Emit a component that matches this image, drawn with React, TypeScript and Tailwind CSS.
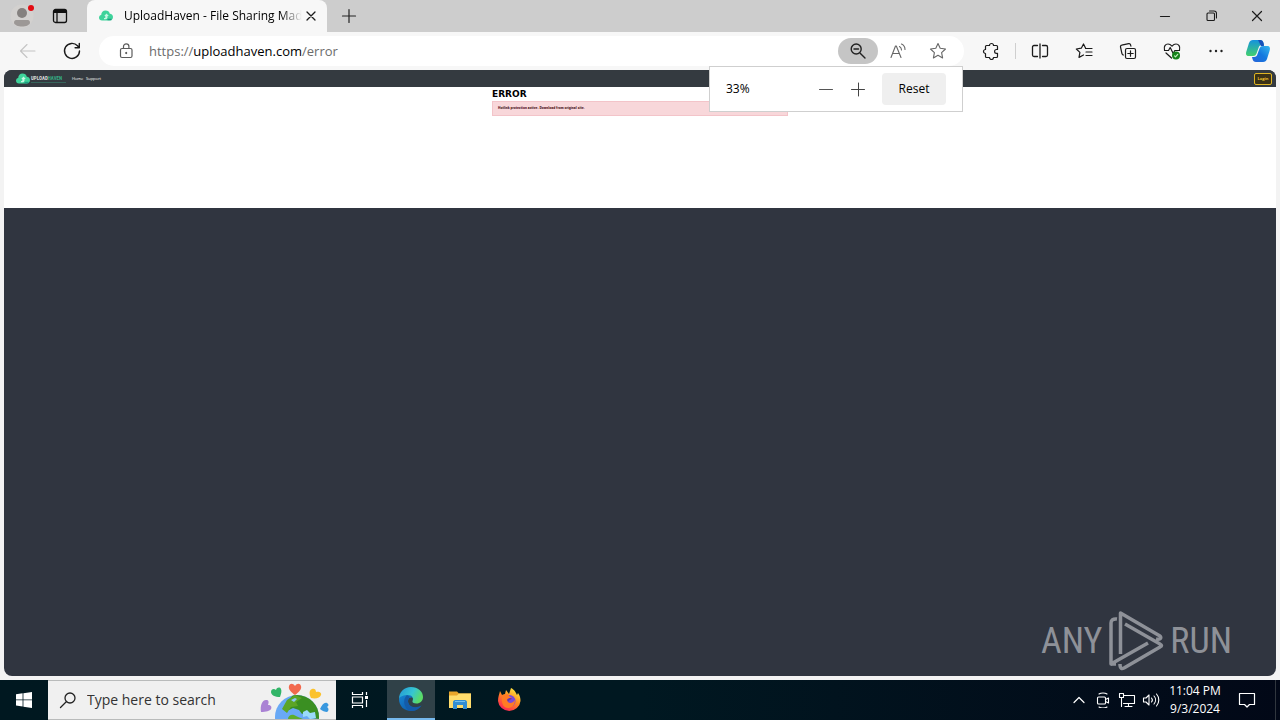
import type { ReactNode } from "react";

function ToolButton({ label, width = "w-11", children }: { label: string; width?: string; children: ReactNode }) {
  return (
    <button type="button" aria-label={label} className={`${width} flex h-7 shrink-0 items-center justify-center`}>
      {children}
    </button>
  );
}

function Line({ d, size = 20, width = 1.2, color = "#1b1b1b", children }: { d: string; size?: number; width?: number; color?: string; children?: ReactNode }) {
  return (
    <svg width={size} height={size} viewBox={`0 0 ${size} ${size}`} fill="none" stroke={color} strokeWidth={width} strokeLinecap="round" strokeLinejoin="round" aria-hidden="true">
      <path d={d} />
      {children}
    </svg>
  );
}

function CloudLogo({ className }: { className: string }) {
  return (
    <svg viewBox="0 0 14 12" className={className} aria-hidden="true">
      <path d="M3 10.5C1.2 10.5 0 9.4 0 7.8 0 6.3 1 5.3 2.2 5.1 2.2 2.5 4 .5 6.6.5c2.2 0 3.7 1.2 4.2 3.2C12.7 3.8 14 5.3 14 7.1c0 2-1.5 3.4-3.4 3.4z" fill="#3fd39b" />
      <path d="M7.500 3.500l2.300 2.600H8.500v1.500c0 1-.8 1.700-1.800 1.700H5V8h1.300V6.100H5.200z" fill="#c9f7e4" />
      <path d="M8.500 9.500h4" stroke="#1d9f83" strokeWidth="1.500" />
    </svg>
  );
}

function TabStrip() {
  return (
    <header className="flex h-8 shrink-0 bg-[#cdcdcd]">
      <div className="flex w-[87px] shrink-0 items-center">
        <button type="button" aria-label="Profile" className="flex w-11 items-center justify-center">
          <svg width="26" height="26" viewBox="0 0 26 26" aria-hidden="true">
            <circle cx="13" cy="13" r="11.5" fill="#d3d1cf" />
            <circle cx="13" cy="10" r="5" fill="#85817f" />
            <path d="M5 19.5C5 17.5 6.5 17 8 17h10c1.5 0 3 .5 3 2.500 0 2.500-4 4-8 4s-8-1.500-8-4z" fill="#9c9896" />
            <circle cx="22" cy="5" r="3" fill="#e30b12" />
          </svg>
        </button>
        <button type="button" aria-label="Tab actions" className="flex w-8 items-center justify-center">
          <svg width="16" height="16" viewBox="0 0 16 16" fill="none" stroke="#111" strokeWidth="1.300" aria-hidden="true">
            <rect x="1.500" y="1.500" width="13" height="13" rx="2" />
            <path d="M5 5v9" />
            <path d="M2 3.500h12" strokeWidth="3" />
          </svg>
        </button>
      </div>
      <div className="flex w-60 shrink-0 items-center rounded-t-lg bg-[#f7f7f7] pl-3">
        <CloudLogo className="h-3.5 w-3.5 shrink-0" />
        <span className="ml-[11px] w-[178px] whitespace-nowrap text-xs text-black [mask-image:linear-gradient(to_right,black_88%,transparent)]">
          UploadHaven - File Sharing Mad
        </span>
        <button type="button" aria-label="Close tab" className="ml-px flex w-4 items-center justify-center">
          <Line size={12} d="M2 2l8 8M10 2l-8 8" width={1.3} />
        </button>
      </div>
      <button type="button" aria-label="New tab" className="flex w-11 items-center justify-center">
        <Line size={16} d="M8 1.500v13M1.500 8h13" color="#222" />
      </button>
      <div className="ml-auto flex shrink-0">
        <button type="button" aria-label="Minimize" className="flex w-[46px] items-center justify-center">
          <Line size={12} d="M1.500 6.500h9" />
        </button>
        <button type="button" aria-label="Restore" className="flex w-[46px] items-center justify-center">
          <Line size={12} d="M3 3h5.500a1 1 0 011 1v5.500a1 1 0 01-1 1H3a1 1 0 01-1-1V4a1 1 0 011-1zM4.500 1h4.500a2.500 2.500 0 012.500 2.500V8" width={1.1} />
        </button>
        <button type="button" aria-label="Close" className="flex w-[46px] items-center justify-center">
          <Line size={12} d="M1.500 1.500l9 9M10.500 1.500l-9 9" />
        </button>
      </div>
    </header>
  );
}

function ZoomPopup() {
  return (
    <div className="absolute right-px top-[30px] z-10 flex h-[46px] w-[254px] items-center border border-[#cfcfcf] bg-white px-4">
      <span className="text-xs text-black">33%</span>
      <button type="button" aria-label="Zoom out" className="ml-auto flex w-8 items-center justify-center">
        <Line size={16} d="M1.500 8.500h13" width={1} color="#555" />
      </button>
      <button type="button" aria-label="Zoom in" className="flex w-8 items-center justify-center">
        <Line size={16} d="M1.500 8.500h13M8.500 2v13" width={1} color="#444" />
      </button>
      <button type="button" className="ml-2 h-8 w-16 rounded-sm bg-[#efefef] text-xs text-black">Reset</button>
    </div>
  );
}

function AddressBar() {
  return (
    <div className="relative flex h-[30px] min-w-0 flex-1 items-center rounded-full bg-white pl-[18px] pr-1.5">
      <svg width="18" height="18" viewBox="0 0 18 18" fill="none" stroke="#5c5c5c" strokeWidth="1.200" className="shrink-0" aria-hidden="true">
        <rect x="3.500" y="6.500" width="11.500" height="9" rx="1.500" />
        <path d="M6.500 6.500V4.500a2.700 2.700 0 015.400 0v2" />
        <circle cx="9.200" cy="11" r=".7" fill="#333" stroke="#333" strokeWidth=".6" />
      </svg>
      <a href="https://uploadhaven.com/error" className="ml-3.5 min-w-0 flex-1 truncate text-[13px] leading-5 text-[#6c6c6c]">
        https://<span className="text-black">uploadhaven.com</span>/error
      </a>
      <button type="button" aria-label="Zoom" className="flex h-[26px] w-10 shrink-0 items-center justify-center rounded-full bg-[#c5c5c5]">
        <Line size={18} d="M11.200 11.200L16 16M5 7h4.500" width={1.4} color="#222"><circle cx="7.200" cy="7" r="5" /></Line>
      </button>
      <ToolButton label="Read aloud" width="w-10">
        <Line size={18} d="M2 15.500L6.500 4h.8L12 15.500M3.500 11.500h7M10.500 4.500a4 4 0 012 3.500M12.500 2a6 6 0 013.500 5.500" width={1.1} color="#666" />
      </ToolButton>
      <ToolButton label="Add to favorites" width="w-10">
        <Line size={18} d="M9 1.500l2.200 4.800 5.300.7-3.900 3.600 1 5.300L9 13.300l-4.600 2.600 1-5.300L1.500 7l5.300-.7z" width={1.1} color="#666" />
      </ToolButton>
      <ZoomPopup />
    </div>
  );
}

function Toolbar() {
  return (
    <nav aria-label="Browser toolbar" className="flex h-[38px] shrink-0 items-center bg-[#f7f7f7] pl-1.5 pr-0.5">
      <ToolButton label="Back">
        <Line d="M17 10H2.500M9 3.500L2.500 10 9 16.500" width={1.1} color="#c4c4c4" />
      </ToolButton>
      <ToolButton label="Refresh">
        <Line d="M17.500 10A7.500 7.500 0 1115.500 4.800l1.500 1.700M17.300 2.500v4.200h-4.200" width={1.4} />
      </ToolButton>
      <div className="w-[5px] shrink-0" />
      <AddressBar />
      <div className="w-[5px] shrink-0" />
      <ToolButton label="Extensions">
        <Line size={18} d="M4.500 3.500H7.500a2 2 0 014 0H14.500a1 1 0 011 1v3H14.500a1.900 1.900 0 000 3.800H15.500V14.500a1 1 0 01-1 1H11.500a2 2 0 01-4 0H4.500a1 1 0 01-1-1V11.500a2 2 0 010-4V4.500a1 1 0 011-1z" />
      </ToolButton>
      <div className="mx-0.5 h-4 w-px shrink-0 bg-[#cfcfcf]" />
      <ToolButton label="Split screen">
        <Line size={18} d="M9 2v14M6.500 3.500H3a1.500 1.500 0 00-1.500 1.500v8A1.500 1.500 0 003 14.500h3.500M11.500 3.500H15A1.500 1.500 0 0116.500 5v8a1.500 1.500 0 01-1.500 1.500h-3.500" width={1.3} />
      </ToolButton>
      <ToolButton label="Favorites">
        <Line size={18} d="M10.500 6L8.500 2 6.300 6.200l-5 .8 3.600 3.400-.9 5 4.500-2.400M10.500 6.500H17M11 10h6M11 13.500h6" />
      </ToolButton>
      <ToolButton label="Collections">
        <Line size={18} d="M8 6.500h7a1.500 1.500 0 011.500 1.500v7a1.500 1.500 0 01-1.500 1.500H8A1.500 1.500 0 016.500 15V8A1.500 1.500 0 018 6.500zM11.500 8.800v5.400M8.800 11.500h5.400M4.200 13L3 11.800 1.500 5a1.500 1.500 0 011.200-1.800l7-1.600a1.500 1.500 0 011.800 1.100l.4 1.500" />
      </ToolButton>
      <ToolButton label="Browser essentials">
        <Line size={18} d="M1.500 8C.5 4.500 2.500 2 5 2c2 0 3 1 4 2.200C10 3 11 2 13 2c2.500 0 4.500 2.500 3.500 6M1.500 8.500h4l1.700-3 3 6 1.600-3H16.500M3 11l5.500 5">
          <circle cx="13" cy="13.500" r="4" fill="#16821b" stroke="none" />
          <path d="M11.500 13.800l1 1 2.200-2.500" stroke="#bfeebc" />
        </Line>
      </ToolButton>
      <ToolButton label="Settings and more">
        <svg width="18" height="18" viewBox="0 0 18 18" fill="#222" aria-hidden="true"><circle cx="3.500" cy="9" r="1.200" /><circle cx="9" cy="9" r="1.200" /><circle cx="14.500" cy="9" r="1.200" /></svg>
      </ToolButton>
      <ToolButton label="Copilot" width="w-10">
        <svg width="26" height="26" viewBox="0 0 26 26" aria-hidden="true">
          <defs>
            <linearGradient id="copilotLeft" x1="0" y1="0" x2="0" y2="1"><stop stopColor="#1592de" /><stop offset="1" stopColor="#42d06d" /></linearGradient>
            <linearGradient id="copilotRight" x1="1" y1="0" x2="0" y2="1"><stop stopColor="#37b9ee" /><stop offset=".5" stopColor="#1479df" /><stop offset="1" stopColor="#2763d9" /></linearGradient>
          </defs>
          <path d="M8 2h7c2 0 3 1 3.500 3L19 7h-2c-2 0-3 1-3.500 3l-2 5.500c-.7 1.700-1.500 2.500-3.500 2.500H4c-3 0-3.500-2-2.500-5L4 5c.7-2 2-3 4-3z" fill="url(#copilotLeft)" />
          <path d="M18 24h-7c-2 0-3-1-3.500-3L7 19h2c2 0 3-1 3.500-3l2-5.500C15.200 8.800 16 8 18 8h4c3 0 3.500 2 2.500 5L22 21c-.7 2-2 3-4 3z" fill="url(#copilotRight)" />
          <path d="M15 2c2 0 3 1 3.500 3L19 8h-3l-3-6z" fill="#1750ba" />
        </svg>
      </ToolButton>
    </nav>
  );
}

function Watermark() {
  return (
    <div className="absolute bottom-1 right-11 flex items-center gap-1.5 font-['Roboto_Condensed','Open_Sans_Condensed','Liberation_Sans_Narrow','Liberation_Sans',sans-serif] text-4xl leading-none text-[#8e9198]">
      <span>ANY</span>
      <svg width="56" height="62" viewBox="0 0 56 62" fill="none" stroke="#8e9198" strokeWidth="3.500" strokeLinejoin="round" strokeLinecap="butt" aria-hidden="true">
        <path d="M9 9C5 8.500 3 10 3 13v41l37-21" />
        <path d="M12.500 44V3L52 26c2 2 0 4-4 3" />
        <path d="M3 54h5" />
        <path d="M12 54c0 5 2 5 4 4l36-21c2-1 2-2 0-3L17 14" />
      </svg>
      <span>RUN</span>
    </div>
  );
}

function WebPage() {
  return (
    <main className="relative mx-1 mb-1 flex min-h-0 flex-1 flex-col overflow-hidden rounded-lg bg-[#303540]">
      <nav aria-label="UploadHaven" className="flex h-[17px] shrink-0 items-center bg-[#343a40] pl-3 pr-1">
        <CloudLogo className="h-3 w-3.5 shrink-0" />
        <a href="#home" className="ml-px w-[35px] border-b border-[#36655c] font-['Roboto_Condensed','Liberation_Sans_Narrow',sans-serif] text-[5px] font-bold leading-[7px] text-[#d9dcdd]">
          UPLOAD<span className="text-[#35ad85]">HAVEN</span>
        </a>
        <a href="#home" className="ml-1.5 w-3.5 whitespace-nowrap text-[4px] leading-[6px] text-white">Home</a>
        <a href="#support" className="whitespace-nowrap text-[4px] leading-[6px] text-white">Support</a>
        <button type="button" className="ml-auto h-3 w-[18px] rounded-xs border border-[#dfb422] bg-[#3b3216] text-[4px] font-bold leading-[6px] text-[#f5c52c]">Login</button>
      </nav>
      <section className="h-[121px] shrink-0 bg-white pt-0.5">
        <div className="mx-auto w-[296px]">
          <h1 className="font-['DejaVu_Sans',sans-serif] text-[9px] font-bold leading-[10px] text-black">ERROR</h1>
          <p className="mt-0.5 h-[15px] border border-[#f3c4c9] bg-[#f8d7da] px-[5px] py-[3px] font-['Roboto_Condensed','Liberation_Sans_Narrow',sans-serif] text-[4px] font-bold leading-[6px] text-[#50151c]">
            Hotlink protection active. Download from original site.
          </p>
        </div>
      </section>
      <Watermark />
    </main>
  );
}

function EarthArt() {
  return (
    <svg width="74" height="38" viewBox="0 0 74 38" className="mr-1 mt-0.5 shrink-0 self-end" aria-hidden="true">
      <defs><clipPath id="globe"><circle cx="39" cy="36" r="22" /></clipPath></defs>
      <circle cx="39" cy="36" r="22" fill="#69a9f5" />
      <g clipPath="url(#globe)">
        <path d="M28 22l8-9 14 1 10 12 2 12-8-1-1-4-5-2-4 2-3-4-6-2-4 2z" fill="#3a8f22" />
        <path d="M24 28l5-9 8-5 7 3-6 4 2 4-7 1-4 6z" fill="#5ca527" />
        <path d="M30 38c0-3 3-5 6-4l4 2 5 2z" fill="#5fae2a" />
        <path d="M33 19l4-2 2 1-3 3z" fill="#8cc8f8" />
        <path d="M45 31l4-2 3 3 5-1 1 6-6 1-3-3-4 1z" fill="#9adafa" />
      </g>
      <path d="M37 14c-4-3-7-6-6-9 1-3 4-3 6 0 2-3 5-3 6 0 1 3-2 6-6 9z" fill="#f2694e" />
      <path d="M22 16c-5 0-9-2-9-5s3-4 5-2c1-3 4-3 5-1 1 2 0 5-1 8z" fill="#32b568" />
      <path d="M53 17c-2-4-2-8 1-9 2-1 4 0 4 3 3-1 6 1 5 3-1 3-5 4-10 3z" fill="#fbc22c" />
      <path d="M3 31c-1-6 1-12 5-12 3 0 3 2 2 5 3 0 4 2 3 4-1 2-5 3-10 3z" fill="#aa82d4" />
      <path d="M62 28c2-4 4-7 7-6 2 1 2 3 0 4 2 1 2 4 0 5-2 0-5-1-7-3z" fill="#3898df" />
    </svg>
  );
}

function TrayIcon({ label, children }: { label: string; children: ReactNode }) {
  return <button type="button" aria-label={label} className="flex w-6 items-center justify-center">{children}</button>;
}

function Taskbar() {
  return (
    <footer className="flex h-10 shrink-0 bg-linear-to-r from-[#001820] via-[#001821] to-[#020817] text-white">
      <button type="button" aria-label="Start" className="flex w-12 shrink-0 items-center justify-center">
        <svg width="16" height="16" viewBox="0 0 16 16" fill="#fff" aria-hidden="true"><path d="M0 2.300L6.600 1.300v6.200H0zM7.400 1.200L16 0v7.500H7.400zM0 8.300h6.600v6.200L0 13.600zM7.400 8.300H16V16l-8.600-1.300z" /></svg>
      </button>
      <label className="flex w-72 shrink-0 items-center border-y border-[#b9bbbb] bg-[#f0f0f0] pl-[11px]">
        <Line size={18} d="M1.500 16.500L7 11" width={1.3} color="#222"><circle cx="11" cy="7" r="5" /></Line>
        <input aria-label="Search" placeholder="Type here to search" className="ml-2.5 min-w-0 flex-1 bg-transparent text-sm text-[#333] outline-none placeholder:text-[#333]" />
        <EarthArt />
      </label>
      <button type="button" aria-label="Task view" className="flex w-[51px] items-center justify-center pr-1">
        <svg width="18" height="18" viewBox="0 0 18 18" fill="none" stroke="#fff" strokeWidth="1.200" aria-hidden="true"><path d="M1.500 1v2.500h10V1M1.500 17v-2.500h10V17M1.500 6h10v6h-10zM15.500 1v3M15.500 9v7" /><path d="M14 5h3v3h-3z" fill="#fff" stroke="none" /></svg>
      </button>
      <button type="button" aria-label="Microsoft Edge" className="flex w-12 items-center justify-center border-b-2 border-[#76b9ed] bg-[#304148]">
        <svg width="24" height="24" viewBox="0 0 24 24" aria-hidden="true">
          <defs>
            <linearGradient id="edgeTop" x1="0" y1="0" x2="1" y2=".4"><stop stopColor="#2296d7" /><stop offset=".6" stopColor="#36c5d2" /><stop offset="1" stopColor="#5adb67" /></linearGradient>
            <linearGradient id="edgeLow" x1="0" y1="0" x2="1" y2="1"><stop stopColor="#1788d5" /><stop offset="1" stopColor="#0b4d9e" /></linearGradient>
          </defs>
          <path d="M0 12c1-4 4-6 8-6 4 0 7 3 6.500 6C14 9.500 9 10 9 14c0 4 4 7 8 6.500 2 0 4-1 5.500-2C20 22 16.500 24 12 24 5 24 0 19 0 12z" fill="url(#edgeLow)" />
          <path d="M8 8c-5 5-3 13 3 16 5 .5 9-2 11.500-5.500C16 22 9 20 9 14c0-2 1-3 2-4z" fill="#145ba8" />
          <path d="M0 12C0 5 5 0 12 0c7 0 12 4.500 12 10 0 4-3 6.500-6.500 6.500-3 0-4.500-1-4-2.500C15 11 13 8 9 8 5 8 1 9 0 12z" fill="url(#edgeTop)" />
        </svg>
      </button>
      <button type="button" aria-label="File Explorer" className="flex w-[49px] items-center justify-center">
        <svg width="22" height="20" viewBox="0 0 22 20" aria-hidden="true"><path d="M0 1.500h8l2 2H22V18H0z" fill="#e9a52a" /><path d="M0 5.500h8l2-2h12V18H0z" fill="#ffdc6c" /><path d="M4 19v-7c0-1 1-2 2-2h10c1 0 2 1 2 2v7h-4v-4H8v4z" fill="#348ed2" /><path d="M6 11.500h10" stroke="#76c1ee" /></svg>
      </button>
      <button type="button" aria-label="Firefox" className="flex w-[49px] items-center justify-center">
        <svg width="24" height="24" viewBox="0 0 24 24" aria-hidden="true">
          <defs><linearGradient id="foxFire" x1=".8" y1="0" x2=".2" y2="1"><stop stopColor="#fff145" /><stop offset=".45" stopColor="#ff8b20" /><stop offset="1" stopColor="#fb195b" /></linearGradient></defs>
          <path d="M3 3l2 4 3-1 1-4 3 4 2-6c4 2 5 5 6 7l1-2c2 3 2.500 5 2.500 8A11.300 11 0 011 13c0-4 1-6 2-10z" fill="url(#foxFire)" />
          <circle cx="12.500" cy="13" r="6" fill="#7949dc" />
          <path d="M5 7l6-1c2 2 1 3 4 4-1 2-4 2-4 4 2 2 5 1 7-2 0 5-3 8-7 8S4 17 5 7z" fill="#ff7b24" />
          <path d="M10 12c1-2 3-2 5-2-1 2-3 2-4 4z" fill="#5d37b7" />
        </svg>
      </button>
      <div className="ml-auto flex shrink-0">
        <TrayIcon label="Show hidden icons"><Line size={16} d="M3 10.500l5-5 5 5" color="#fff" /></TrayIcon>
        <TrayIcon label="Meet now"><Line size={16} d="M3.500 5h6a1 1 0 011 1v5a1 1 0 01-1 1h-6a1 1 0 01-1-1V6a1 1 0 011-1zM10.500 7.500L13.500 6v5l-3-1.500M4 2c2-1.300 6-1.300 8 0M4 15c2 1.300 6 1.300 8 0" color="#fff" width={1.1} /></TrayIcon>
        <TrayIcon label="Network"><Line size={18} d="M5.500 4.500H16.500v8H5.500M10.500 12.500v3M7 15.500h7M1.500 2.500h4v4h-4zM3.500 6.500v9" color="#fff" width={1.1} /></TrayIcon>
        <TrayIcon label="Volume"><Line size={18} d="M1.500 7h2.500l3-3v10l-3-3H1.500zM9.500 7a3 3 0 010 4M12 5a6 6 0 010 8M14.500 3a9 9 0 010 12" color="#fff" width={1.1} /></TrayIcon>
        <div className="flex w-16 flex-col items-center justify-center whitespace-nowrap text-xs leading-[18px]">
          <span>11:04 PM</span><span>9/3/2024</span>
        </div>
        <button type="button" aria-label="Notifications" className="flex w-10 items-center justify-center">
          <Line size={18} d="M1.500 2.500h15v11h-5L9 16l-2.500-2.500h-5z" color="#fff" />
        </button>
        <div className="ml-2 mr-1 w-px bg-[#30363e]" />
      </div>
    </footer>
  );
}

export default function App() {
  return (
    <div className="flex h-screen min-h-80 flex-col bg-[#f3f3f3] font-['Open_Sans','Noto_Sans',sans-serif]">
      <TabStrip />
      <Toolbar />
      <WebPage />
      <Taskbar />
    </div>
  );
}
